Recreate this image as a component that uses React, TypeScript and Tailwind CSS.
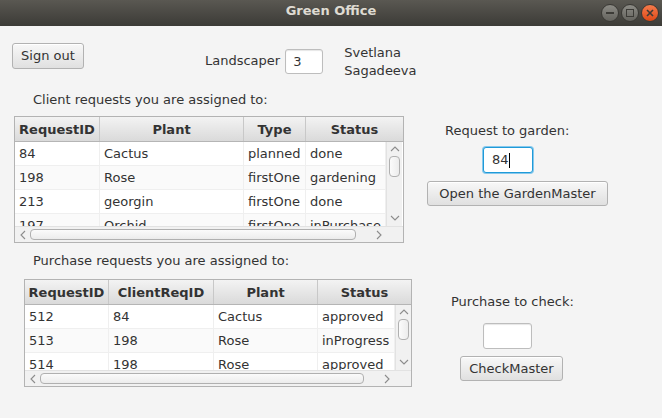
import React from 'react';

type Col = { title: string; head: string; cell: string };

const clientCols: Col[] = [
  { title: 'RequestID', head: 'w-[85px]', cell: 'w-[85px]' },
  { title: 'Plant', head: 'w-[144px]', cell: 'w-[144px]' },
  { title: 'Type', head: 'w-[62px]', cell: 'w-[62px]' },
  { title: 'Status', head: 'w-[97px]', cell: 'w-[80px]' },
];

const clientRows = [
  ['84', 'Cactus', 'planned', 'done'],
  ['198', 'Rose', 'firstOne', 'gardening'],
  ['213', 'georgin', 'firstOne', 'done'],
  ['197', 'Orchid', 'firstOne', 'inPurchase'],
];

const purchaseCols: Col[] = [
  { title: 'RequestID', head: 'w-[84px]', cell: 'w-[84px]' },
  { title: 'ClientReqID', head: 'w-[105px]', cell: 'w-[105px]' },
  { title: 'Plant', head: 'w-[104px]', cell: 'w-[104px]' },
  { title: 'Status', head: 'w-[93px]', cell: 'w-[77px]' },
];

const purchaseRows = [
  ['512', '84', 'Cactus', 'approved'],
  ['513', '198', 'Rose', 'inProgress'],
  ['514', '198', 'Rose', 'approved'],
];

function Chevron({ dir }: { dir: 'up' | 'down' | 'left' | 'right' }) {
  if (dir === 'up' || dir === 'down') {
    return (
      <svg width="10" height="6" viewBox="0 0 10 6" fill="none" stroke="#8c8c8c" strokeWidth="1.1">
        <polyline points={dir === 'up' ? '1,5 5,1 9,5' : '1,1 5,5 9,1'} />
      </svg>
    );
  }
  return (
    <svg width="6" height="10" viewBox="0 0 6 10" fill="none" stroke="#8c8c8c" strokeWidth="1.1">
      <polyline points={dir === 'left' ? '5,1 1,5 5,9' : '1,1 5,5 1,9'} />
    </svg>
  );
}

function VScroll({ thumbTop }: { thumbTop: string }) {
  return (
    <div className="w-[16px] h-full flex flex-col items-center bg-[#f1f1f1] border-l border-[#e2e2e2]">
      <div className="mt-[4px]"><Chevron dir="up" /></div>
      <div className={`${thumbTop} w-[11px] h-[21px] rounded-[4px] border border-[#b0b0b0] bg-gradient-to-r from-[#fbfbfb] to-[#ececec]`} />
      <div className="flex-1" />
      <div className="mb-[5px]"><Chevron dir="down" /></div>
    </div>
  );
}

function HScroll({ thumb }: { thumb: string }) {
  return (
    <div className="h-[16px] flex items-center bg-[#f1f1f1] border-t border-[#e2e2e2]">
      <div className="ml-[5px]"><Chevron dir="left" /></div>
      <div className={`${thumb} ml-[4px] h-[11px] rounded-[4px] border border-[#b0b0b0] bg-gradient-to-b from-[#fbfbfb] to-[#ececec]`} />
      <div className="ml-[20px]"><Chevron dir="right" /></div>
      <div className="flex-1" />
    </div>
  );
}

function Table({ cols, rows, body, thumb, thumbTop }: { cols: Col[]; rows: string[][]; body: string; thumb: string; thumbTop: string }) {
  return (
    <div className="border border-[#b3b3b3] bg-white">
      <div className="flex h-[25px] border-b border-[#b5b5b5] bg-gradient-to-b from-[#f3f3f3] to-[#dadada]">
        {cols.map((c, i) => (
          <div
            key={c.title}
            className={`${c.head} pt-[2px] flex items-center justify-center font-bold text-[#333333] ${i < cols.length - 1 ? 'border-r border-[#c8c8c8]' : ''}`}
          >
            {c.title}
          </div>
        ))}
      </div>
      <div className={`${body} flex`}>
        <div className="overflow-hidden">
          {rows.map((r, ri) => (
            <div key={ri} className={`flex h-[24px] border-b border-[#efefef] ${ri % 2 === 1 ? 'bg-[#fafafa]' : 'bg-white'}`}>
              {r.map((v, ci) => (
                <div key={ci} className={`${cols[ci].cell} pl-[4px] pt-[1px] flex items-center border-r border-[#efefef] text-[#333333] whitespace-nowrap overflow-hidden`}>
                  {v}
                </div>
              ))}
            </div>
          ))}
        </div>
        <VScroll thumbTop={thumbTop} />
      </div>
      <HScroll thumb={thumb} />
    </div>
  );
}

function Button({ label, size }: { label: string; size: string }) {
  return (
    <div className={`${size} flex items-center justify-center rounded-[3px] border border-[#b2b2b2] bg-gradient-to-b from-[#f8f8f8] to-[#e0e0e0] text-[#333333] shadow-[inset_0_1px_0_#ffffff]`}>
      {label}
    </div>
  );
}

export default function App() {
  return (
    <div className="w-[662px] h-[418px] overflow-hidden font-['DejaVu_Sans',sans-serif] text-[13px] leading-[16px]">
      <div className="h-[26px] flex items-start justify-center relative bg-gradient-to-b from-[#5a5852] to-[#3c3b37]">
        <span className="pt-[3px] font-bold text-[#dfdbd2]">Green Office</span>
        <div className="absolute right-[3px] top-[4px] flex gap-[2px]">
          <div className="w-[18px] h-[18px] rounded-full flex items-center justify-center bg-gradient-to-b from-[#8c8b85] to-[#64635e] border border-[#3a3935]">
            <div className="w-[8px] h-[2px] bg-[#3c3b37]" />
          </div>
          <div className="w-[18px] h-[18px] rounded-full flex items-center justify-center bg-gradient-to-b from-[#8c8b85] to-[#64635e] border border-[#3a3935]">
            <div className="w-[8px] h-[8px] border-[1.5px] border-[#3c3b37]" />
          </div>
          <div className="w-[18px] h-[18px] rounded-full flex items-center justify-center bg-gradient-to-b from-[#f47a4a] to-[#dd4814] border border-[#3a3935]">
            <svg width="8" height="8" viewBox="0 0 8 8" stroke="#3c3b37" strokeWidth="1.6">
              <line x1="1" y1="1" x2="7" y2="7" />
              <line x1="7" y1="1" x2="1" y2="7" />
            </svg>
          </div>
        </div>
      </div>

      <div className="h-[392px] bg-[#f4f4f4]">
        <div className="h-[66px] flex items-start pl-[12px] pt-[17px]">
          <Button label="Sign out" size="w-[72px] h-[26px]" />
          <span className="ml-[121px] mt-[10px] text-[#333333]">Landscaper</span>
          <div className="ml-[5px] mt-[6px] w-[38px] h-[25px] pl-[7px] flex items-center rounded-[3px] border border-[#bdbdbd] bg-white text-[#333333] shadow-[inset_0_1px_1px_#e6e6e6]">
            3
          </div>
          <div className="ml-[21px] mt-[1px] leading-[18px] text-[#333333]">
            <div>Svetlana</div>
            <div>Sagadeeva</div>
          </div>
        </div>

        <div className="flex">
          <div className="w-[420px] flex flex-col items-start">
            <span className="ml-[33px] text-[#333333]">Client requests you are assigned to:</span>
            <div className="mt-[8px] ml-[14px]">
              <Table cols={clientCols} rows={clientRows} body="h-[84px]" thumb="w-[326px]" thumbTop="mt-[4px]" />
            </div>
            <span className="mt-[10px] ml-[33px] text-[#333333]">Purchase requests you are assigned to:</span>
            <div className="mt-[10px] ml-[24px]">
              <Table cols={purchaseCols} rows={purchaseRows} body="h-[65px]" thumb="w-[324px]" thumbTop="mt-[4px]" />
            </div>
          </div>

          <div className="flex flex-col items-start">
            <span className="mt-[31px] ml-[25px] text-[#333333]">Request to garden:</span>
            <div className="mt-[8px] ml-[63px] w-[50px] h-[26px] pl-[8px] flex items-center rounded-[3px] border border-[#1f9ad8] ring-1 ring-[#86c8ec] bg-white text-[#333333]">
              84<span className="w-px h-[15px] bg-black" />
            </div>
            <div className="mt-[8px] ml-[7px]">
              <Button label="Open the GardenMaster" size="w-[181px] h-[25px]" />
            </div>
            <span className="mt-[88px] ml-[31px] text-[#333333]">Purchase to check:</span>
            <div className="mt-[13px] ml-[63px] w-[49px] h-[26px] rounded-[3px] border border-[#bdbdbd] bg-white shadow-[inset_0_1px_1px_#e6e6e6]" />
            <div className="mt-[7px] ml-[40px]">
              <Button label="CheckMaster" size="w-[103px] h-[25px]" />
            </div>
          </div>
        </div>
      </div>
    </div>
  );
}
